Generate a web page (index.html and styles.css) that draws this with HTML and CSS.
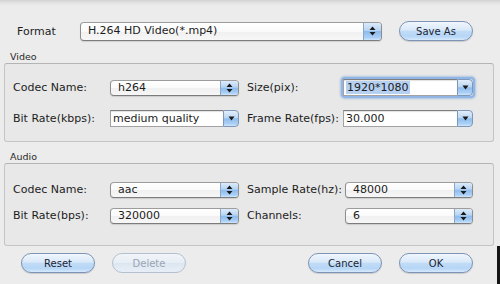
FILE: index.html
```html
<!DOCTYPE html>
<html>
<head>
<meta charset="utf-8">
<link rel="stylesheet" href="styles.css">
</head>
<body>
<div class="window">
  <div class="toprow">
    <span class="flabel">Format</span>
    <div class="popup popup-wide">
      <span class="ptext">H.264 HD Video(*.mp4)</span>
      <span class="parrow"><svg width="7" height="10" viewBox="0 0 7 10"><path d="M3.5 0.5 L6.5 4 L0.5 4 Z M0.5 6 L6.5 6 L3.5 9.5 Z" fill="#1a1a1a"/></svg></span>
    </div>
    <button class="btn">Save As</button>
  </div>

  <div class="glabel">Video</div>
  <div class="group group-video">
    <span class="lbl">Codec Name:</span>
    <div class="popup">
      <span class="ptext">h264</span>
      <span class="parrow"><svg width="7" height="10" viewBox="0 0 7 10"><path d="M3.5 0.5 L6.5 4 L0.5 4 Z M0.5 6 L6.5 6 L3.5 9.5 Z" fill="#1a1a1a"/></svg></span>
    </div>
    <span class="lbl lbl2">Size(pix):</span>
    <div class="combo focus">
      <span class="ctext"><span class="sel">1920*1080</span></span>
      <span class="carrow"><svg width="7" height="5" viewBox="0 0 7 5"><path d="M0.5 0.5 L6.5 0.5 L3.5 4.5 Z" fill="#1a1a1a"/></svg></span>
    </div>

    <span class="lbl">Bit Rate(kbps):</span>
    <div class="combo">
      <span class="ctext">medium quality</span>
      <span class="carrow"><svg width="7" height="5" viewBox="0 0 7 5"><path d="M0.5 0.5 L6.5 0.5 L3.5 4.5 Z" fill="#1a1a1a"/></svg></span>
    </div>
    <span class="lbl lbl2">Frame Rate(fps):</span>
    <div class="combo">
      <span class="ctext">30.000</span>
      <span class="carrow"><svg width="7" height="5" viewBox="0 0 7 5"><path d="M0.5 0.5 L6.5 0.5 L3.5 4.5 Z" fill="#1a1a1a"/></svg></span>
    </div>
  </div>

  <div class="glabel glabel-audio">Audio</div>
  <div class="group group-audio">
    <span class="lbl">Codec Name:</span>
    <div class="popup">
      <span class="ptext">aac</span>
      <span class="parrow"><svg width="7" height="10" viewBox="0 0 7 10"><path d="M3.5 0.5 L6.5 4 L0.5 4 Z M0.5 6 L6.5 6 L3.5 9.5 Z" fill="#1a1a1a"/></svg></span>
    </div>
    <span class="lbl lbl2">Sample Rate(hz):</span>
    <div class="popup popup-r">
      <span class="ptext">48000</span>
      <span class="parrow"><svg width="7" height="10" viewBox="0 0 7 10"><path d="M3.5 0.5 L6.5 4 L0.5 4 Z M0.5 6 L6.5 6 L3.5 9.5 Z" fill="#1a1a1a"/></svg></span>
    </div>

    <span class="lbl">Bit Rate(bps):</span>
    <div class="popup">
      <span class="ptext">320000</span>
      <span class="parrow"><svg width="7" height="10" viewBox="0 0 7 10"><path d="M3.5 0.5 L6.5 4 L0.5 4 Z M0.5 6 L6.5 6 L3.5 9.5 Z" fill="#1a1a1a"/></svg></span>
    </div>
    <span class="lbl lbl2">Channels:</span>
    <div class="popup popup-r">
      <span class="ptext">6</span>
      <span class="parrow"><svg width="7" height="10" viewBox="0 0 7 10"><path d="M3.5 0.5 L6.5 4 L0.5 4 Z M0.5 6 L6.5 6 L3.5 9.5 Z" fill="#1a1a1a"/></svg></span>
    </div>
  </div>

  <div class="bottomrow">
    <button class="btn">Reset</button>
    <button class="btn disabled">Delete</button>
    <span class="spacer"></span>
    <button class="btn">Cancel</button>
    <button class="btn">OK</button>
  </div>
</div>
<div class="edge"></div>
</body>
</html>
```

FILE: styles.css
```css
html, body {
  margin: 0;
  padding: 0;
}
body {
  position: relative;
  width: 500px;
  height: 284px;
  overflow: hidden;
  background: linear-gradient(#d2d2d2 0px, #e4e4e4 3px, #ececec 6px, #ececec 100%);
  font-family: "DejaVu Sans", "Lucida Grande", sans-serif;
  color: #1c1c1c;
}
.window {
  padding-top: 21px;
}
.edge {
  position: absolute;
  left: 497px;
  top: 246px;
  width: 3px;
  height: 38px;
  background: #151515;
}
.toprow {
  display: flex;
  align-items: center;
  height: 20px;
  padding-left: 17px;
}
.flabel {
  width: 63px;
  font-size: 11px;
}
.popup {
  position: relative;
  box-sizing: border-box;
  height: 16px;
  border: 1px solid #8e8e8e;
  border-top-color: #9c9c9c;
  border-bottom-color: #7c7c7c;
  border-radius: 4px;
  background: linear-gradient(#ffffff, #fafafa 50%, #f0f0f0 51%, #f7f7f7);
  display: flex;
  align-items: center;
  overflow: hidden;
  box-shadow: 0 1px 1px rgba(0,0,0,0.12);
}
.popup-wide {
  width: 302px;
  height: 19px;
}
.ptext {
  flex: 1;
  padding-left: 7px;
  font-size: 11px;
  line-height: 14px;
  white-space: nowrap;
}
.parrow {
  width: 17px;
  align-self: stretch;
  display: flex;
  align-items: center;
  justify-content: center;
  border-left: 1px solid #8aa6c8;
  background: linear-gradient(#dcebfb, #b6d3f2 45%, #8dbbec 50%, #a9cff6 85%, #cfe6fc);
}
.btn {
  box-sizing: border-box;
  width: 74px;
  height: 20px;
  margin-left: 17px;
  border: 1px solid #7e94b4;
  border-radius: 10px;
  background: linear-gradient(#f0f6fd, #d9e9f9 45%, #c0dbf6 52%, #b6d6f6 80%, #d6eafc);
  font-family: "DejaVu Sans", "Lucida Grande", sans-serif;
  font-size: 10px;
  color: #1a2433;
  padding: 0;
  box-shadow: 0 1px 1px rgba(0,0,0,0.15);
}
.btn.disabled {
  border-color: #b4c0d0;
  background: linear-gradient(#f2f5f9, #e6edf5 50%, #dde6f0 52%, #e7eef6);
  color: #9aa5b3;
  box-shadow: none;
}
.glabel {
  margin-top: 10px;
  height: 12px;
  line-height: 12px;
  padding-left: 10px;
  font-size: 9.5px;
  color: #2a2a2a;
}
.glabel-audio {
  margin-top: 9px;
}
.group {
  box-sizing: border-box;
  margin-left: 4px;
  width: 490px;
  border: 1px solid #c4c4c4;
  border-top-color: #b4b4b4;
  border-radius: 3px;
  background: #e8e8e8;
  padding-left: 8px;
  display: grid;
  grid-template-columns: 97px 129px 104px 130px;
  grid-auto-rows: 17px;
  align-items: center;
}
.group-video {
  height: 79px;
  padding-top: 15px;
  row-gap: 14px;
}
.group-audio {
  height: 83px;
  padding-top: 17px;
  row-gap: 9px;
}
.lbl {
  font-size: 11px;
  white-space: nowrap;
}
.lbl2 {
  padding-left: 8px;
}
.popup-r {
  margin-left: 2px;
}
.combo {
  position: relative;
  box-sizing: border-box;
  height: 17px;
  display: flex;
  align-items: stretch;
}
.ctext {
  flex: 1;
  box-sizing: border-box;
  background: #fff;
  border: 1px solid #a2a2a2;
  border-top-color: #7e7e7e;
  border-right: none;
  padding-left: 2px;
  font-size: 11px;
  line-height: 15px;
  white-space: nowrap;
  box-shadow: inset 0 1px 1px rgba(0,0,0,0.12);
}
.sel {
  background: #b5d0f0;
  padding: 0 1px;
}
.carrow {
  width: 16px;
  box-sizing: border-box;
  border: 1px solid #7f97b8;
  border-radius: 0 4px 4px 0;
  display: flex;
  align-items: center;
  justify-content: center;
  background: linear-gradient(#e2eefb, #bcd7f3 45%, #8fbdec 52%, #abd0f6 85%, #d0e6fb);
}
.combo.focus {
  box-shadow: 0 0 0 2px #8fb6e6, 0 0 2px 3px rgba(120,160,220,0.5);
  border-radius: 2px;
}
.bottomrow {
  display: flex;
  align-items: center;
  margin-top: 7px;
  height: 20px;
  padding-left: 4px;
}
.spacer {
  width: 105px;
}
```
